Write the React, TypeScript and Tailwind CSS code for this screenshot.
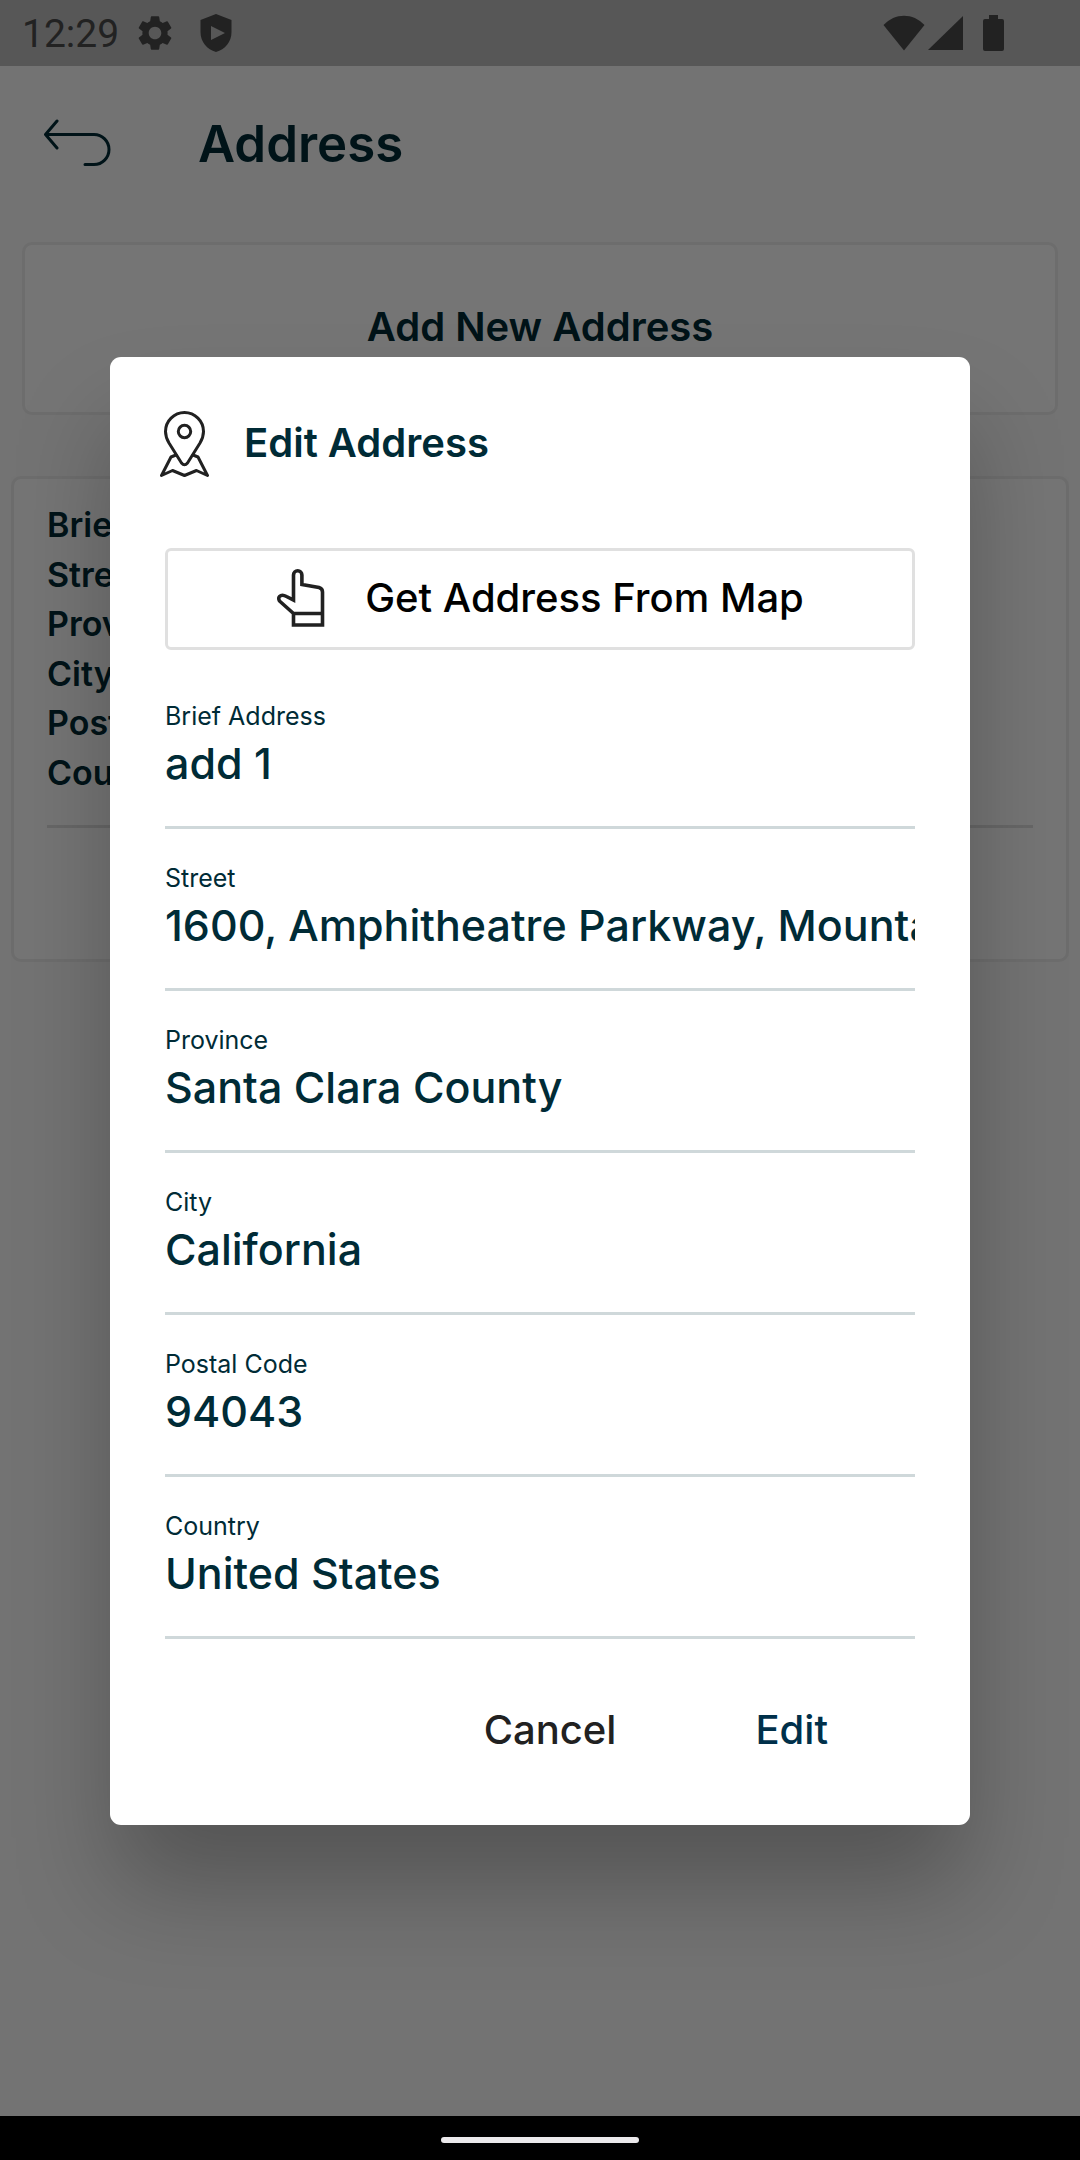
import { MdSettings } from "react-icons/md";

const addressLabels = ["Brief", "Street", "Province", "City", "Postal", "Country"];

const fields = [
  { id: "brief", label: "Brief Address", value: "add 1" },
  { id: "street", label: "Street", value: "1600, Amphitheatre Parkway, Mountain View" },
  { id: "province", label: "Province", value: "Santa Clara County" },
  { id: "city", label: "City", value: "California" },
  { id: "postal", label: "Postal Code", value: "94043" },
  { id: "country", label: "Country", value: "United States" },
];

function StatusBar() {
  return (
    <div className="flex h-[66px] items-center bg-[#bdbdbd] pl-[22px] pr-[76px] text-[#4a4a4a]">
      <span className="pt-[2px] font-['Roboto'] text-[39px] font-normal leading-none">12:29</span>
      <MdSettings className="ml-[15px] size-[42px]" />
      <svg className="ml-6 h-[38px] w-[32px]" viewBox="0 0 32 38" fill="currentColor" aria-hidden="true">
        <path
          fillRule="evenodd"
          d="M16 0 31.500 6V18C31.500 28 25 35.500 16 38 7 35.500 .500 28 .500 18V6ZM11 12V26L25 19Z"
        />
      </svg>
      <div className="ml-auto flex items-center">
        <svg className="h-[36px] w-[42px]" viewBox="0 0 42 36" fill="currentColor" aria-hidden="true">
          <path d="M.5 10C12-2.500 30-2.500 41.500 10L21 35.500Z" />
        </svg>
        <svg className="ml-[3px] h-[36px] w-[35px]" viewBox="0 0 35 36" fill="currentColor" aria-hidden="true">
          <path d="M35 1V35H0Z" />
        </svg>
        <svg className="ml-5 h-[36px] w-[21px]" viewBox="0 0 21 36" fill="currentColor" aria-hidden="true">
          <path d="M6 0H15V4H19Q21 4 21 6V34Q21 36 19 36H2Q0 36 0 34V6Q0 4 2 4H6Z" />
        </svg>
      </div>
    </div>
  );
}

function BackIcon() {
  return (
    <svg
      className="h-[48px] w-[68px]"
      viewBox="0 0 68 48"
      fill="none"
      stroke="currentColor"
      strokeWidth="3"
      strokeLinecap="round"
      strokeLinejoin="round"
      aria-hidden="true"
    >
      <path d="M14 2 2.500 15.500 14 29M2.500 15.500H51A15 15 0 0 1 51 45.500H42" />
    </svg>
  );
}

function MapPinIcon() {
  return (
    <svg
      className="h-[68px] w-[50px]"
      viewBox="20 20 50 68"
      fill="none"
      stroke="currentColor"
      strokeWidth="3"
      strokeLinejoin="round"
      strokeLinecap="round"
      aria-hidden="true"
    >
      <circle cx="44.500" cy="41.500" r="6.200" />
      <path d="M41.500 73 29 53Q25.500 47 25.500 41.500A19 19 0 0 1 63.500 41.500Q63.500 47 60 53L47.500 73Q44.500 76.500 41.500 73Z" />
      <path d="M36 65 31 67 21.500 85.500 32.500 80.500 44.500 85.500 56.500 80.500 67.500 85.500 58 67 53 65" />
    </svg>
  );
}

function HandIcon() {
  return (
    <svg
      className="h-[60px] w-[50px]"
      viewBox="26 18 50 60"
      fill="none"
      stroke="currentColor"
      strokeWidth="3.600"
      aria-hidden="true"
    >
      <path d="M43.500 75V63.500L29.500 51Q28 48 29.500 46.500 32 44 36.500 46.500L43.500 50V25A4.200 4.200 0 0 1 51.900 25V34.500L69 37.500Q72.500 38.500 72.500 42V75ZM43.500 63.500H72.500" />
    </svg>
  );
}

export default function App() {
  return (
    <div className="flex min-h-screen flex-col font-['Inter',sans-serif] text-[#002b36]">
      <div className="relative flex flex-1 flex-col overflow-hidden bg-[#fafafa]">
        <StatusBar />
        <header className="flex items-center gap-[87px] pl-[43px] pt-[44px]">
          <button type="button" aria-label="Back">
            <BackIcon />
          </button>
          <h1 className="pt-[2px] text-[51px] font-semibold leading-[64px]">Address</h1>
        </header>
        <button
          type="button"
          className="mx-[22px] mt-[66px] h-[173px] rounded-[10px] border-3 border-[#ededed] bg-white pb-[4px] text-[40px] font-semibold"
        >
          Add New Address
        </button>
        <section className="mx-[11px] mt-[61px] h-[486px] rounded-[10px] border-3 border-[#ededed] bg-white px-[33px] pt-[21px]">
          <ul className="flex h-[297px] flex-col justify-between text-[34px] font-semibold leading-[49px]">
            {addressLabels.map((label) => (
              <li key={label}>{label}</li>
            ))}
          </ul>
          <hr className="mt-[28px] border-t-3 border-[#e0e0e0]" />
        </section>

        <div className="absolute inset-0 flex items-center bg-black/54 px-[110px] pt-[66px]">
          <div
            role="dialog"
            aria-modal="true"
            aria-labelledby="dialog-title"
            className="w-full rounded-[11px] bg-white pt-[53px] pb-[67px] shadow-[0_66px_100px_-6px_rgba(0,0,0,0.27)]"
          >
            <div className="flex items-center gap-[34px] pl-[50px] text-[#212121]">
              <MapPinIcon />
              <h2 id="dialog-title" className="pb-[2px] text-[40px] font-semibold leading-[56px] text-[#002b36]">
                Edit Address
              </h2>
            </div>
            <form className="px-[55px] pt-[70px]" onSubmit={(e) => e.preventDefault()}>
              <button
                type="button"
                className="mb-[17px] flex h-[102px] w-full items-center justify-center gap-[39px] rounded-md border-3 border-[#e0e0e0] pb-[3px] text-[40px] font-medium text-black"
              >
                <span className="text-[#212121]">
                  <HandIcon />
                </span>
                Get Address From Map
              </button>
              {fields.map((f) => (
                <div key={f.id} className="border-b-3 border-[#cfd8da] pt-[33px] pb-[35px]">
                  <label htmlFor={f.id} className="block text-[25px] font-normal leading-8">
                    {f.label}
                  </label>
                  <input
                    id={f.id}
                    defaultValue={f.value}
                    className="mt-[3px] block h-14 w-full bg-transparent text-[43px] font-medium leading-[56px] outline-none"
                  />
                </div>
              ))}
            </form>
            <div className="flex justify-end gap-[139px] pt-[63px] pr-[142px] text-[40px] font-medium leading-[56px]">
              <button type="button" className="text-[#212121]">
                Cancel
              </button>
              <button type="button" className="text-[#00304a]">
                Edit
              </button>
            </div>
          </div>
        </div>
      </div>
      <div className="flex h-[44px] items-center justify-center bg-black pt-[4px]">
        <div className="h-[6px] w-[198px] rounded-full bg-[#ebe9ec]" />
      </div>
    </div>
  );
}
